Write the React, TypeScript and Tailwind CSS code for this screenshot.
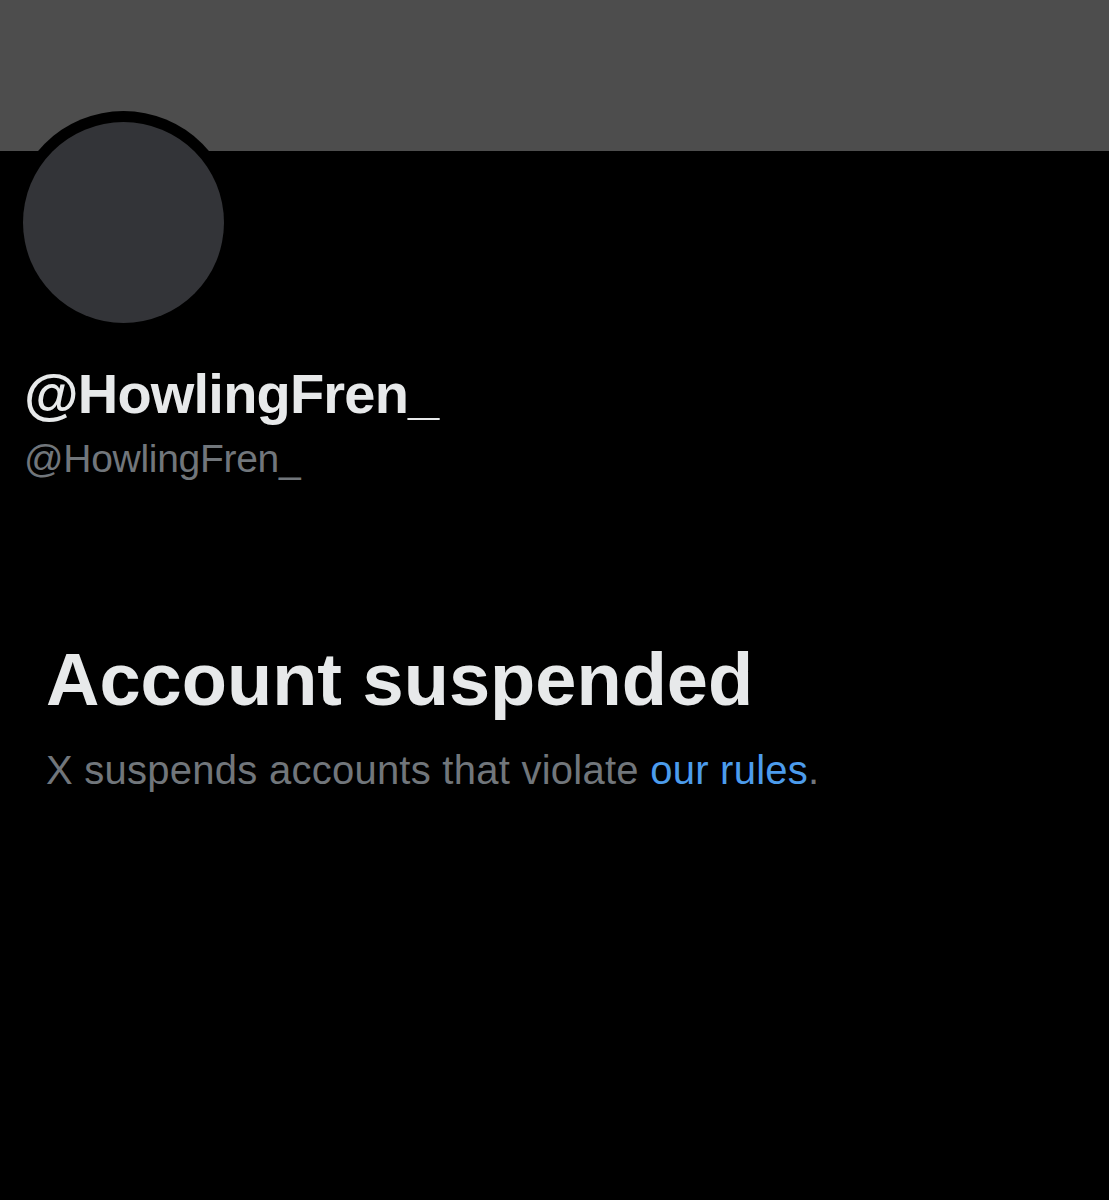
export default function App() {
  return (
    <div
      className="w-[1109px] h-[1200px] bg-black overflow-hidden"
      style={{ fontFamily: '"Liberation Sans", Arial, sans-serif' }}
    >
      {/* banner */}
      <div className="h-[151px] bg-[#4d4d4d]" />

      {/* avatar overlapping banner */}
      <div className="relative h-[172px]">
        <div className="absolute left-[12px] top-[-40px] w-[223px] h-[223px] rounded-full bg-black flex items-center justify-center">
          <div className="w-[201px] h-[201px] rounded-full bg-[#333438]" />
        </div>
      </div>

      <div className="px-[24px] pt-[39px]">
        <div className="text-[56px] leading-[64px] font-bold text-[#e7e9ea] tracking-[-0.8px]">
          @HowlingFren_
        </div>
        <div className="text-[39px] leading-[46px] text-[#71767b] mt-[10px] tracking-[-0.3px]">
          @HowlingFren_
        </div>
      </div>

      <div className="px-[46px] pt-[156px]">
        <div className="text-[74px] leading-[84px] font-bold text-[#e7e9ea]">
          Account suspended
        </div>
        <div className="text-[40px] leading-[48px] text-[#71767b] mt-[24px] tracking-[0.25px]">
          X suspends accounts that violate{" "}
          <span className="text-[#4c9cec]">our rules</span>.
        </div>
      </div>
    </div>
  );
}
